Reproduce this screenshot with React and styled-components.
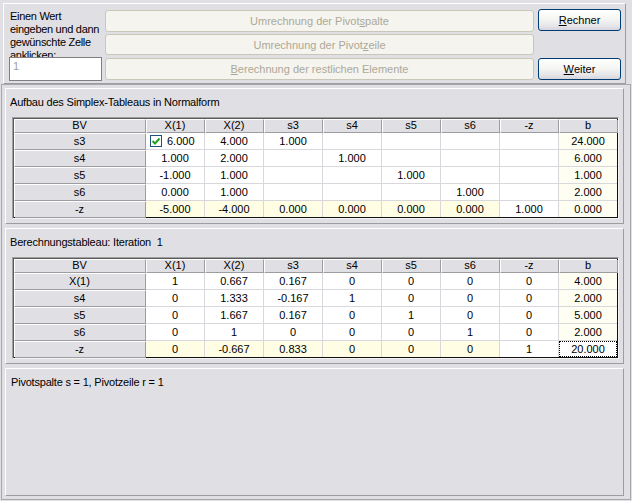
import React from 'react';
import styled, { createGlobalStyle } from 'styled-components';

const GlobalStyle = createGlobalStyle`
  html, body {
    margin: 0;
    padding: 0;
    background: #e0dfe3;
  }
  body {
    font-family: "Liberation Sans", Arial, sans-serif;
    font-size: 11px;
    color: #000;
  }
`;

const Window = styled.div`
  width: 632px;
  height: 501px;
  padding-top: 3px;
  box-sizing: border-box;
  background: #e0dfe3;
  overflow: hidden;
`;

const TopPanel = styled.div`
  display: flex;
  margin-left: 3px;
  width: 623px;
  height: 81px;
  box-sizing: border-box;
  padding: 6px 4px 0 5px;
  border: 1px solid;
  border-color: #fff #9d9da1 #9d9da1 #fff;
`;

const LeftCol = styled.div`
  display: flex;
  flex-direction: column;
  width: 93px;
  flex: none;
`;

const Hint = styled.div`
  height: 47px;
  line-height: 13px;
  padding-left: 1px;
  white-space: nowrap;
  letter-spacing: -0.3px;
  overflow: hidden;
`;

const ValueInput = styled.div`
  height: 24px;
  box-sizing: border-box;
  border: 1px solid #7f7f7f;
  background: #fff;
  color: #a0a0a0;
  padding: 1px 3px;
  line-height: 14px;
`;

const MidCol = styled.div`
  display: flex;
  flex-direction: column;
  flex: 1;
  margin-left: 3px;
`;

const FlatButton = styled.div`
  height: ${p => p.h}px;
  margin-top: ${p => p.mt || 0}px;
  box-sizing: border-box;
  border: 1px solid #c9c7ba;
  border-radius: 3px;
  background: #f5f4ee;
  color: #aca899;
  display: flex;
  align-items: center;
  justify-content: center;
`;

const RightCol = styled.div`
  display: flex;
  flex-direction: column;
  width: 83px;
  flex: none;
  margin-left: 4px;
  margin-top: -1px;
`;

const PushButton = styled.div`
  height: 22px;
  margin-top: ${p => p.mt || 0}px;
  box-sizing: border-box;
  border: 1px solid #003c74;
  border-radius: 3px;
  background: linear-gradient(180deg, #ffffff 0%, #f6f6f3 45%, #e6e6ea 80%, #d4d4dc 100%);
  display: flex;
  align-items: center;
  justify-content: center;
`;

const LowerBox = styled.div`
  display: flex;
  flex-direction: column;
  gap: 4px;
  margin-left: 1px;
  width: 630px;
  height: 416px;
  box-sizing: border-box;
  padding: 3px 6px 0 3px;
  border: 1px solid #a7a6aa;
`;

const Panel = styled.div`
  height: ${p => p.h}px;
  box-sizing: border-box;
  padding: 6px 4px 0 ${p => p.pl || 4}px;
  border: 1px solid;
  border-color: #fff #9d9da1 #9d9da1 #fff;
`;

const PanelTitle = styled.div`
  height: 14px;
  line-height: 14px;
  letter-spacing: -0.2px;
  white-space: pre;
`;

const Grid = styled.div`
  display: grid;
  grid-template-columns: 131px repeat(8, 58px);
  grid-template-rows: 13px repeat(5, 16px);
  gap: 1px;
  width: 607px;
  margin: 8px 0 0 2px;
  box-sizing: border-box;
  background: #d8d7dc;
  border: 1px solid;
  border-color: #a0a0a0 #f4f4f4 #f4f4f4 #a0a0a0;
  box-shadow: inset 1px 1px 0 #5a5a5a, inset -1px -1px 0 #111;
  padding: 1px;
`;

const FixedCell = styled.div`
  background: #e0dfe3;
  box-shadow: inset 1px 1px 0 #fff, 1px 1px 0 #9d9da1;
  text-align: center;
  line-height: ${p => p.lh}px;
  white-space: nowrap;
`;

const toneColors = {
  white: '#fff',
  yellow: '#fffde3',
  cream: '#fefef3',
};

const Cell = styled.div`
  background: ${p => toneColors[p.tone]};
  text-align: center;
  line-height: 16px;
  white-space: nowrap;
  ${p => p.focus && 'outline: 1px dotted #000; outline-offset: -1px;'}
`;

const CheckCell = styled(Cell)`
  display: flex;
  align-items: center;
  gap: 5px;
  padding-left: 4px;
`;

const CheckBox = styled.span`
  display: inline-flex;
  width: 12px;
  height: 12px;
  box-sizing: border-box;
  border: 1px solid #1c5180;
  background: #fff;
  align-items: center;
  justify-content: center;
`;

const StatusText = styled.div`
  line-height: 14px;
  letter-spacing: -0.2px;
`;

const headers = ['BV', 'X(1)', 'X(2)', 's3', 's4', 's5', 's6', '-z', 'b'];

const normalform = [
  ['s3', '6.000', '4.000', '1.000', '', '', '', '', '24.000'],
  ['s4', '1.000', '2.000', '', '1.000', '', '', '', '6.000'],
  ['s5', '-1.000', '1.000', '', '', '1.000', '', '', '1.000'],
  ['s6', '0.000', '1.000', '', '', '', '1.000', '', '2.000'],
  ['-z', '-5.000', '-4.000', '0.000', '0.000', '0.000', '0.000', '1.000', '0.000'],
];

const iteration = [
  ['X(1)', '1', '0.667', '0.167', '0', '0', '0', '0', '4.000'],
  ['s4', '0', '1.333', '-0.167', '1', '0', '0', '0', '2.000'],
  ['s5', '0', '1.667', '0.167', '0', '1', '0', '0', '5.000'],
  ['s6', '0', '1', '0', '0', '0', '1', '0', '2.000'],
  ['-z', '0', '-0.667', '0.833', '0', '0', '0', '1', '20.000'],
];

const Check = () => (
  <CheckBox>
    <svg width="10" height="10" viewBox="0 0 10 10">
      <path d="M1.5 5 L4 7.5 L8.5 2.5" fill="none" stroke="#21a121" strokeWidth="2" />
    </svg>
  </CheckBox>
);

const Tableau = ({ rows, checked, focus }) => {
  const toneOf = (row, col) => {
    if (focus && row === 4 && col === 8) return 'white';
    if (rows[row][0] === '-z' && col < 7) return 'yellow';
    if (col === 8) return 'cream';
    return 'white';
  };

  return (
    <Grid>
      {headers.map(h => (
        <FixedCell key={h} lh={13}>{h}</FixedCell>
      ))}
      {rows.map((r, ri) =>
        r.map((v, ci) => {
          if (ci === 0) return <FixedCell key={ri + '-' + ci} lh={16}>{v}</FixedCell>;
          if (checked && ri === 0 && ci === 1)
            return (
              <CheckCell key={ri + '-' + ci} tone="white">
                <Check />
                {v}
              </CheckCell>
            );
          return (
            <Cell key={ri + '-' + ci} tone={toneOf(ri, ci)} focus={focus && ri === 4 && ci === 8}>
              {v}
            </Cell>
          );
        })
      )}
    </Grid>
  );
};

const App = () => (
  <Window>
    <GlobalStyle />
    <TopPanel>
      <LeftCol>
        <Hint>
          Einen Wert<br />
          eingeben und dann<br />
          gewünschte Zelle<br />
          anklicken:
        </Hint>
        <ValueInput>1</ValueInput>
      </LeftCol>
      <MidCol>
        <FlatButton h={22}>Umrechnung der Pivot<u>s</u>palte</FlatButton>
        <FlatButton h={21} mt={2}>Umrechnung der Pivot<u>z</u>eile</FlatButton>
        <FlatButton h={22} mt={3}><u>B</u>erechnung der restlichen Elemente</FlatButton>
      </MidCol>
      <RightCol>
        <PushButton><u>R</u>echner</PushButton>
        <PushButton mt={27}><u>W</u>eiter</PushButton>
      </RightCol>
    </TopPanel>
    <LowerBox>
      <Panel h={136}>
        <PanelTitle>Aufbau des Simplex-Tableaus in Normalform</PanelTitle>
        <Tableau rows={normalform} checked />
      </Panel>
      <Panel h={136}>
        <PanelTitle>Berechnungstableau: Iteration  1</PanelTitle>
        <Tableau rows={iteration} focus />
      </Panel>
      <Panel h={128} pl={5}>
        <StatusText>Pivotspalte s = 1, Pivotzeile r = 1</StatusText>
      </Panel>
    </LowerBox>
  </Window>
);

export default App;
